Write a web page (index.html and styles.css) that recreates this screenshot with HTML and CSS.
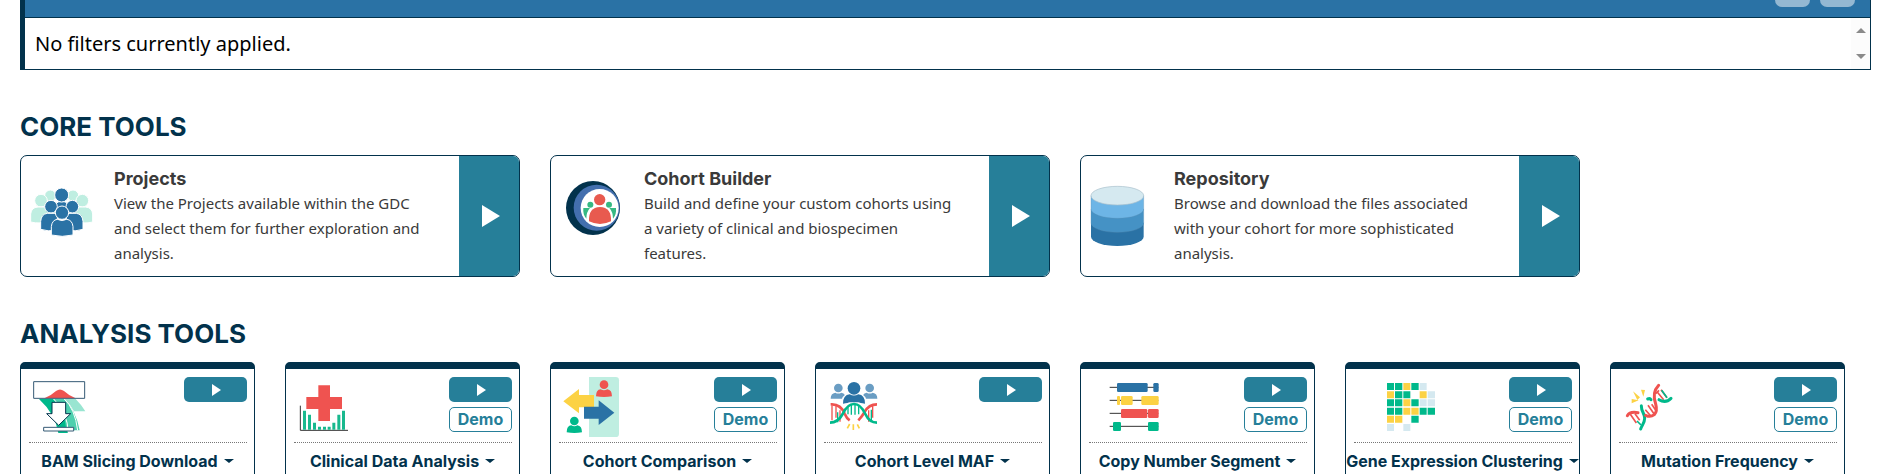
FILE: index.html
```
<!DOCTYPE html>
<html lang="en">
<head>
    <meta charset="UTF-8">
    <meta name="viewport" content="width=device-width, initial-scale=1.0">
    <title>Analysis Center</title>
    <link rel="stylesheet" href="styles.css">
</head>
<body>

<!-- Cohort filter panel -->
<section class="query">
    <div class="query-header">
        <button type="button" class="query-btn" aria-label="Expand filters"></button>
        <button type="button" class="query-btn" aria-label="Collapse filters"></button>
    </div>
    <div class="query-body">
        <p>No filters currently applied.</p>
        <div class="scroll-track">
            <button type="button" class="scroll-up" aria-label="Scroll up"></button>
            <button type="button" class="scroll-down" aria-label="Scroll down"></button>
        </div>
    </div>
</section>

<main class="tools">
    <!-- Core tools -->
    <h2>CORE TOOLS</h2>
    <div class="grid core-grid">
        <article class="core-card">
            <svg class="core-icon" viewBox="0 0 210 180" aria-hidden="true">
                <g fill="#bfeee1" stroke="#fff" stroke-width="3">
                    <circle cx="64" cy="29" r="17"/>
                    <circle cx="132" cy="29" r="17"/>
                    <path d="M45 90V62q20-20 40-8h27q22-12 40 8v28z"/>
                    <circle cx="36" cy="44" r="19"/>
                    <circle cx="160" cy="44" r="19"/>
                    <path d="M5 108V84q2-20 22-21h24q14 4 16 20v22q-35 10-62 3z"/>
                    <path d="M191 108V84q-2-20-22-21h-24q-14 4-16 20v22q35 10 62 3z"/>
                </g>
                <g fill="#2a72a5" stroke="#fff" stroke-width="3">
                    <path d="M80 60q2-13 12-13h12q10 0 12 13v22H80z"/>
                    <circle cx="98" cy="27" r="21"/>
                    <circle cx="66" cy="62" r="19"/>
                    <circle cx="130" cy="62" r="19"/>
                    <path d="M35 130v-24q2-22 20-24h30v50q-28 6-50-2z"/>
                    <path d="M162 130v-24q-2-22-20-24h-30v50q28 6 50-2z"/>
                    <circle cx="99" cy="80" r="20"/>
                    <path d="M67 147v-25q2-20 18-22 14 7 28 0 17 2 19 22v25q-32 8-65 0z"/>
                </g>
            </svg>
            <div class="core-text">
                <h3>Projects</h3>
                <p>View the Projects available within the GDC and select them for further exploration and analysis.</p>
            </div>
            <button type="button" class="core-play" aria-label="Open Projects">
                <svg class="play-large" viewBox="0 0 18 22"><path d="M0 0l18 11L0 22z" fill="#fff"/></svg>
            </button>
        </article>

        <article class="core-card">
            <svg class="core-icon" viewBox="0 0 210 180" aria-hidden="true">
                <circle cx="102" cy="66" r="81" fill="#02324c"/>
                <circle cx="113" cy="65" r="69" fill="#436fae"/>
                <circle cx="122" cy="66" r="57" fill="#fff"/>
                <g fill="#36b983">
                    <circle cx="94" cy="56" r="9"/>
                    <circle cx="150" cy="56" r="9"/>
                    <path d="M73 66h20q-11 12-11 32-11-12-9-32z"/>
                    <path d="M171 66h-20q11 12 11 32 11-12 9-32z"/>
                </g>
                <g fill="#e85a4f">
                    <circle cx="122" cy="41" r="17"/>
                    <path d="M90 106q-2-42 33-43 35 1 33 43-33 16-66 0z"/>
                </g>
            </svg>
            <div class="core-text">
                <h3>Cohort Builder</h3>
                <p>Build and define your custom cohorts using a variety of clinical and biospecimen features.</p>
            </div>
            <button type="button" class="core-play" aria-label="Open Cohort Builder">
                <svg class="play-large" viewBox="0 0 18 22"><path d="M0 0l18 11L0 22z" fill="#fff"/></svg>
            </button>
        </article>

        <article class="core-card">
            <svg class="core-icon" viewBox="0 0 210 180" aria-hidden="true">
                <path d="M6 110h158v42a79 28 0 0 1-158 0z" fill="#2a72a5"/>
                <path d="M6 69h158v42a79 28 0 0 1-158 0z" fill="#4592c5" stroke="#5c8fb4"/>
                <path d="M6 29h158v40a79 28 0 0 1-158 0z" fill="#6db5e6" stroke="#5c8fb4"/>
                <ellipse cx="85" cy="29" rx="79" ry="28" fill="#d5e9f0" stroke="#a9bfcc" stroke-width="2"/>
            </svg>
            <div class="core-text">
                <h3>Repository</h3>
                <p>Browse and download the files associated with your cohort for more sophisticated analysis.</p>
            </div>
            <button type="button" class="core-play" aria-label="Open Repository">
                <svg class="play-large" viewBox="0 0 18 22"><path d="M0 0l18 11L0 22z" fill="#fff"/></svg>
            </button>
        </article>
    </div>

    <!-- Analysis tools -->
    <h2>ANALYSIS TOOLS</h2>
    <div class="grid">
        <article class="tool-card">
            <div class="tool-top">
                <svg class="tool-icon" viewBox="0 0 270 180" aria-hidden="true">
                    <path d="M30 66h45q38 40 42 102H88Q78 110 30 66z" fill="#00b98b"/>
                    <path d="M72 66h34q35 34 46 94h-40q-4-54-40-94z" fill="#4dd0ae"/>
                    <path d="M106 66h34q18 18 29 37h-34q-10-20-29-37z" fill="#99e5d1"/>
                    <path d="M74 66q42 40 44 102M106 66q32 30 40 94" fill="none" stroke="#fff" stroke-width="3"/>
                    <path d="M46 64q20-8 35-22 12-9 24 0 15 14 35 22z" fill="#ef5350"/>
                    <path d="M14 14h153v50H14z" fill="none" stroke="#355a75" stroke-width="3"/>
                    <path d="M69 76h41v34h15l-36 35-36-35h16z" fill="#fff" stroke="#02324c" stroke-width="3"/>
                    <path d="M44 151h90v11H44z" fill="#fff" stroke="#355a75" stroke-width="3"/>
                </svg>
                <div class="tool-actions">
                    <button type="button" class="play-btn" aria-label="Open BAM Slicing Download">
                        <svg class="play-small" viewBox="0 0 9 12"><path d="M0 0l9 6-9 6z" fill="#fff"/></svg>
                    </button>
                </div>
            </div>
            <button type="button" class="tool-title">BAM Slicing Download</button>
        </article>

        <article class="tool-card">
            <div class="tool-top">
                <svg class="tool-icon" viewBox="0 0 270 180" aria-hidden="true">
                    <path d="M19 86v74h143" fill="none" stroke="#333" stroke-width="3"/>
                    <path d="M27 101h9v57h-9zM42 113h9v45h-9zM57 137h9v21h-9zM72 149h9v9h-9zM87 149h9v9h-9zM101 149h9v9h-9zM115 137h9v21h-9zM130 113h9v45h-9zM144 101h9v57h-9z" fill="#18b98e"/>
                    <path d="M73 25h35v35h36v36h-36v36H73V96H37V60h36z" fill="#ef5350"/>
                </svg>
                <div class="tool-actions">
                    <button type="button" class="play-btn" aria-label="Open Clinical Data Analysis">
                        <svg class="play-small" viewBox="0 0 9 12"><path d="M0 0l9 6-9 6z" fill="#fff"/></svg>
                    </button>
                    <button type="button" class="demo-btn">Demo</button>
                </div>
            </div>
            <button type="button" class="tool-title">Clinical Data Analysis</button>
        </article>

        <article class="tool-card">
            <div class="tool-top">
                <svg class="tool-icon" viewBox="0 0 270 180" aria-hidden="true">
                    <path d="M90 0h80q10 0 10 10v160q0 10-10 10H90z" fill="#bfeee1"/>
                    <path d="M13 73l47-37v18h45v37H60v18z" fill="#fcd244"/>
                    <path d="M166 107l-47-37v19H75v36h44v19z" fill="#2a72a5"/>
                    <g fill="#ef5350">
                        <circle cx="135" cy="23" r="13"/>
                        <path d="M111 58q0-20 14-21 10 6 20 0 14 2 14 21-24 4-48 0z"/>
                    </g>
                    <g fill="#00b98b">
                        <circle cx="46" cy="132" r="13"/>
                        <path d="M23 166q0-20 14-21 9 6 18 0 14 2 14 21-23 4-46 0z"/>
                    </g>
                </svg>
                <div class="tool-actions">
                    <button type="button" class="play-btn" aria-label="Open Cohort Comparison">
                        <svg class="play-small" viewBox="0 0 9 12"><path d="M0 0l9 6-9 6z" fill="#fff"/></svg>
                    </button>
                    <button type="button" class="demo-btn">Demo</button>
                </div>
            </div>
            <button type="button" class="tool-title">Cohort Comparison</button>
        </article>

        <article class="tool-card">
            <div class="tool-top">
                <svg class="tool-icon" viewBox="0 0 270 180" aria-hidden="true">
                    <g fill="#6a9dc3">
                        <circle cx="43" cy="33" r="13"/>
                        <circle cx="137" cy="33" r="13"/>
                        <path d="M20 65q0-16 14-18 9 5 18 0 10 2 10 8-8 6-8 10zM160 65q0-16-14-18-9 5-18 0-10 2-10 8 8 6 8 10z"/>
                    </g>
                    <g fill="#2a72a5">
                        <circle cx="90" cy="34" r="19"/>
                        <path d="M57 80q0-26 20-28 13 7 26 0 20 2 20 28-16-2-20-4H77q-4 2-20 4z"/>
                    </g>
                    <path d="M36 86v36M48 100v34M134 100v34M146 86v36M24 86v44" stroke="#ef5350" stroke-width="4"/>
                    <path d="M72 88v24M82 83v30M93 83v30M104 88v24M41 106v30M142 98v36" stroke="#00b98b" stroke-width="4"/>
                    <g fill="none" stroke-width="8">
                        <path d="M20 82q30-2 42 28 6 14 15 20M103 130q10-10 19-25 12-23 37-23" stroke="#ef5350"/>
                        <path d="M18 137q24 0 38-26 14-30 34-30t34 30q12 26 35 26" stroke="#00b98b"/>
                    </g>
                    <path d="M70 154l7-13M88 142v17M106 154l-6-12" stroke="#fcd244" stroke-width="5"/>
                </svg>
                <div class="tool-actions">
                    <button type="button" class="play-btn" aria-label="Open Cohort Level MAF">
                        <svg class="play-small" viewBox="0 0 9 12"><path d="M0 0l9 6-9 6z" fill="#fff"/></svg>
                    </button>
                </div>
            </div>
            <button type="button" class="tool-title">Cohort Level MAF</button>
        </article>

        <article class="tool-card">
            <div class="tool-top">
                <svg class="tool-icon" viewBox="0 0 270 180" aria-hidden="true">
                    <path d="M62 31h146M62 70h146M62 109h146M62 148h146" stroke="#333" stroke-width="3"/>
                    <g fill="#2a72a5">
                        <rect x="84" y="18" width="92" height="27" rx="4"/>
                        <rect x="193" y="18" width="16" height="27" rx="4"/>
                    </g>
                    <g fill="#fcd244">
                        <rect x="84" y="57" width="9" height="27" rx="3"/>
                        <rect x="96" y="57" width="35" height="27" rx="4"/>
                        <rect x="157" y="57" width="52" height="27" rx="4"/>
                    </g>
                    <g fill="#ef5350">
                        <rect x="96" y="96" width="79" height="27" rx="4"/>
                        <rect x="177" y="96" width="32" height="27" rx="4"/>
                    </g>
                    <g fill="#00b98b">
                        <rect x="72" y="135" width="24" height="27" rx="4"/>
                        <rect x="177" y="135" width="32" height="27" rx="4"/>
                    </g>
                </svg>
                <div class="tool-actions">
                    <button type="button" class="play-btn" aria-label="Open Copy Number Segment">
                        <svg class="play-small" viewBox="0 0 9 12"><path d="M0 0l9 6-9 6z" fill="#fff"/></svg>
                    </button>
                    <button type="button" class="demo-btn">Demo</button>
                </div>
            </div>
            <button type="button" class="tool-title">Copy Number Segment</button>
        </article>

        <article class="tool-card">
            <div class="tool-top">
                <svg class="tool-icon" viewBox="0 0 270 180" aria-hidden="true">
                    <path fill="#00b98b" d="M99 18h21v21H99zM123 18h22v21h-22zM172 18h22v21h-22zM123 43h22v21h-22zM148 43h21v21h-21zM99 67h21v21H99zM123 67h22v21h-22zM172 67h22v21h-22zM99 92h21v21H99zM123 92h22v21h-22zM197 92h21v21h-21zM221 92h22v21h-22zM172 116h22v21h-22z"/>
                    <path fill="#fcd244" d="M148 18h21v21h-21zM99 43h21v21H99zM197 43h21v21h-21zM148 67h21v21h-21zM148 92h21v21h-21zM172 92h22v21h-22zM99 116h21v21H99zM123 116h22v21h-22z"/>
                    <path fill="#d5e9f0" d="M197 18h21v21h-21zM221 43h22v21h-22zM197 67h21v21h-21zM221 67h22v21h-22zM99 141h21v21H99zM148 141h21v21h-21z"/>
                </svg>
                <div class="tool-actions">
                    <button type="button" class="play-btn" aria-label="Open Gene Expression Clustering">
                        <svg class="play-small" viewBox="0 0 9 12"><path d="M0 0l9 6-9 6z" fill="#fff"/></svg>
                    </button>
                    <button type="button" class="demo-btn">Demo</button>
                </div>
            </div>
            <button type="button" class="tool-title">Gene Expression Clustering</button>
        </article>

        <article class="tool-card">
            <div class="tool-top">
                <svg class="tool-icon" viewBox="0 0 270 180" aria-hidden="true">
                    <path d="M34 112l18 26M48 110l14 20M79 98l17 20M87 85l20 28M98 82l14 20M110 50l10-10" stroke="#ef5350" stroke-width="5"/>
                    <path d="M114 44l20 24M126 38l18 24" stroke="#ef5350" stroke-width="5"/>
                    <path d="M128 40l16 22M54 132l12 12" stroke="#00b98b" stroke-width="5"/>
                    <g fill="none" stroke-width="9" stroke-linecap="round">
                        <path d="M65 156c4-12 12-18 12-32 0-16-10-18-10-38" stroke="#00b98b"/>
                        <path d="M86 66q7-3 10 2M120 68q20 12 36-4" stroke="#00b98b"/>
                        <path d="M25 116q8-14 32-9M80 115q14 7 26-2 10-10 4-32-12-34 9-56" stroke="#ef5350"/>
                    </g>
                    <path d="M42 43l21 18-8 8zM66 38l12 1-5 20zM38 66l21 4-21 9z" fill="#fcd244"/>
                </svg>
                <div class="tool-actions">
                    <button type="button" class="play-btn" aria-label="Open Mutation Frequency">
                        <svg class="play-small" viewBox="0 0 9 12"><path d="M0 0l9 6-9 6z" fill="#fff"/></svg>
                    </button>
                    <button type="button" class="demo-btn">Demo</button>
                </div>
            </div>
            <button type="button" class="tool-title">Mutation Frequency</button>
        </article>
    </div>
</main>

</body>
</html>
```
FILE: styles.css
```
/* General Styling */
* {
    box-sizing: border-box;
}
body {
    margin: 0;
    background: #fff;
    color: #3a3a3a;
    font-family: "Noto Sans", sans-serif;
    overflow: hidden;
}
button {
    padding: 0;
    border: none;
    background: none;
    font-family: Inter, sans-serif;
    cursor: pointer;
}
h2, h3, p {
    margin: 0;
}
h2, h3 {
    font-family: Inter, sans-serif;
    font-weight: 700;
}

/* Filter panel */
.query {
    margin: 0 11px 0 20px;
    border: 1px solid #02324c;
    border-width: 0 1px 1px 5px;
}
.query-header {
    display: flex;
    justify-content: flex-end;
    gap: 10px;
    height: 18px;
    padding-right: 15px;
    background: #2a72a5;
    border-bottom: 1px solid #02324c;
}
.query-btn {
    width: 35px;
    height: 7px;
    background: #94b8d2;
    border-radius: 0 0 7px 7px;
}
.query-body {
    display: flex;
    justify-content: space-between;
    color: #000;
    font-size: 20px;
    line-height: 51px;
}
.query-body p {
    padding-left: 10px;
}
.scroll-track {
    display: flex;
    flex-direction: column;
    justify-content: space-between;
    align-items: center;
    width: 19px;
    padding: 10px 0;
    background: #fcfcfc;
}
.scroll-up, .scroll-down {
    border: 5px solid transparent;
    border-top-width: 0;
    border-bottom-color: #8a8a8a;
}
.scroll-down {
    border-width: 5px 5px 0;
    border-color: #8a8a8a transparent transparent;
}

/* Tool sections */
.tools {
    padding: 40px 37px 0 20px;
}
.tools h2 {
    padding: 2px 0 13px;
    color: #02324c;
    font-size: 26px;
    line-height: 30px;
}
.grid {
    display: grid;
    grid-template-columns: repeat(7, minmax(0, 1fr));
    gap: 30px;
}
.core-grid {
    margin-bottom: 40px;
}

/* Core cards */
.core-card {
    grid-column: span 2;
    display: flex;
    align-items: center;
    min-height: 122px;
    border: 1px solid #02324c;
    border-radius: 7px;
    overflow: hidden;
}
.core-icon {
    flex: none;
    width: 70px;
    height: 60px;
    margin-left: 8px;
    overflow: visible;
}
.core-text {
    flex: 1;
    padding: 0 30px 0 15px;
}
.core-text h3 {
    font-size: 18px;
    line-height: 25px;
}
.core-text p {
    font-size: 15px;
    line-height: 25px;
}
.core-play {
    display: flex;
    justify-content: center;
    align-items: center;
    align-self: stretch;
    width: 60px;
    padding-left: 4px;
    background: #267f99;
}
.play-large {
    width: 18px;
    height: 22px;
}

/* Analysis cards */
.tool-card {
    padding-bottom: 20px;
    border: 1px solid #02324c;
    border-top-width: 7px;
    border-radius: 5px;
}
.tool-top {
    display: flex;
    justify-content: space-between;
    height: 74px;
    margin: 0 7px 0 8px;
    padding-top: 8px;
    border-bottom: 1px dotted #777;
}
.tool-icon {
    width: 90px;
    height: 60px;
}
.tool-actions {
    display: flex;
    flex-direction: column;
    gap: 5px;
    width: 63px;
}
.play-btn, .demo-btn {
    display: flex;
    justify-content: center;
    align-items: center;
    height: 25px;
    border-radius: 5px;
}
.play-btn {
    padding-left: 2px;
    background: #267f99;
}
.play-small {
    width: 9px;
    height: 12px;
}
.demo-btn {
    padding-bottom: 2px;
    border: 1px solid #267f99;
    color: #267f99;
    font-size: 16px;
    font-weight: 700;
}
.tool-title {
    display: flex;
    justify-content: center;
    align-items: center;
    gap: 6px;
    width: 100%;
    padding-top: 7px;
    color: #02324c;
    font-size: 16px;
    font-weight: 700;
    line-height: 22px;
    white-space: nowrap;
}
.tool-title::after {
    content: "";
    border: 5px solid transparent;
    border-top: 4px solid #02324c;
    border-bottom-width: 0;
}
```
